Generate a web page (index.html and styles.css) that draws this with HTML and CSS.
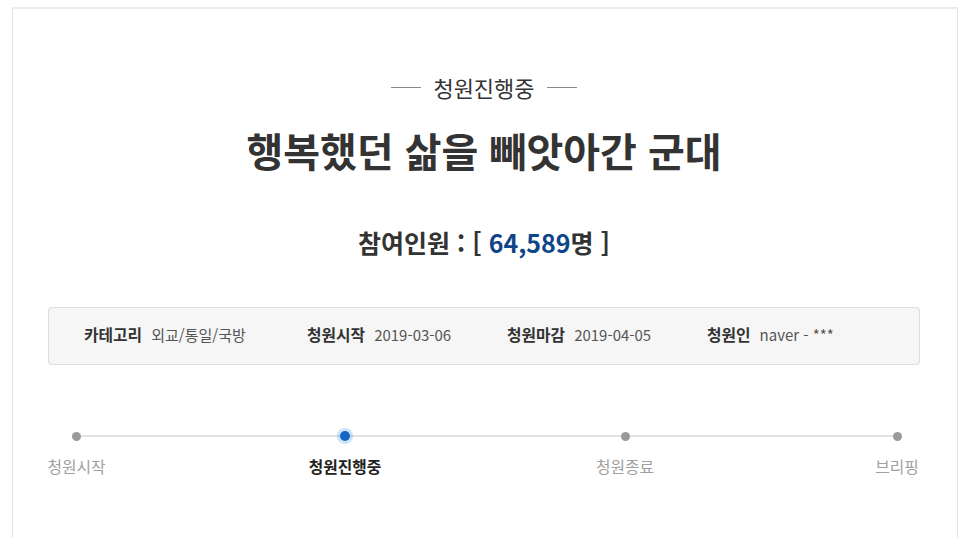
FILE: index.html
```html
<!DOCTYPE html>
<html lang="ko">
<head>
<meta charset="utf-8">
<title>청원진행중</title>
<link rel="stylesheet" href="styles.css">
</head>
<body>
<div class="page">
  <div class="card">
    <div class="status"><span class="dash"></span><span class="status-text">청원진행중</span><span class="dash"></span></div>
    <h1 class="title">행복했던 삶을 빼앗아간 군대</h1>
    <p class="count">참여인원 : [ <span class="num">64,589</span>명 ]</p>
    <ul class="info">
      <li class="info-item w-cat"><strong class="label">카테고리</strong><span class="value">외교/통일/국방</span></li>
      <li class="info-item w-date"><strong class="label">청원시작</strong><span class="value">2019-03-06</span></li>
      <li class="info-item w-date"><strong class="label">청원마감</strong><span class="value">2019-04-05</span></li>
      <li class="info-item"><strong class="label">청원인</strong><span class="value">naver - ***</span></li>
    </ul>
    <ol class="steps">
      <li class="step s1"><span class="dot-wrap"><span class="dot"></span></span><span class="step-label">청원시작</span></li>
      <li class="step s2 active"><span class="dot-wrap"><span class="dot"></span></span><span class="step-label">청원진행중</span></li>
      <li class="step s3"><span class="dot-wrap"><span class="dot"></span></span><span class="step-label">청원종료</span></li>
      <li class="step s4"><span class="dot-wrap"><span class="dot"></span></span><span class="step-label">브리핑</span></li>
    </ol>
  </div>
</div>
</body>
</html>
```

FILE: styles.css
```css
html, body {
  margin: 0;
  padding: 0;
  background: #ffffff;
  font-family: "Noto Sans CJK KR", "Noto Sans", "Liberation Sans", sans-serif;
  color: #333333;
  overflow: hidden;
}

.page {
  padding: 7px 0 0 12px;
}

.card {
  box-sizing: border-box;
  width: 946px;
  min-height: 600px;
  border: 1px solid #e4e4e4;
  border-top: 2px solid #ececec;
  padding: 0 37px 0 35px;
  background: #ffffff;
}

.status {
  margin-top: 66px;
  display: flex;
  justify-content: center;
  align-items: center;
  gap: 12px;
  height: 24px;
  line-height: 24px;
  font-size: 22px;
  color: #333333;
}

.dash {
  display: block;
  width: 30px;
  height: 1px;
  background: #8a8a8a;
}

.title {
  margin: 26px 0 0;
  text-align: center;
  font-size: 40px;
  line-height: 50px;
  font-weight: 700;
  color: #333333;
  letter-spacing: 0;
}

.count {
  margin: 50px 0 0;
  text-align: center;
  font-size: 25px;
  line-height: 34px;
  font-weight: 700;
  color: #333333;
}

.num {
  color: #0e4588;
}

.info {
  list-style: none;
  margin: 48px 0 0;
  padding: 17px 20px 19px 35px;
  display: flex;
  align-items: center;
  background: #f6f6f6;
  border: 1px solid #dddddd;
  border-radius: 3px;
  font-size: 15px;
  line-height: 20px;
}

.info-item {
  display: flex;
  align-items: center;
  gap: 9px;
  white-space: nowrap;
}

.w-cat {
  width: 223px;
}

.w-date {
  width: 200px;
}

.label {
  font-weight: 700;
  font-size: 15.8px;
  color: #333333;
}

.value {
  color: #555555;
  font-size: 15px;
}

.steps {
  position: relative;
  list-style: none;
  margin: 63px 0 0;
  padding: 0;
  display: flex;
  align-items: flex-start;
}

.steps::before {
  content: "";
  position: absolute;
  top: 7px;
  left: 28px;
  right: 21px;
  height: 2px;
  background: #e2e2e2;
}

.step {
  position: relative;
  display: flex;
  flex-direction: column;
  align-items: center;
}

.s1 { width: 57px; }
.s2 { width: 80px; margin-left: 200px; }
.s3 { width: 80px; margin-left: 200px; }
.s4 { width: 44px; margin-left: 210px; }

.dot-wrap {
  display: flex;
  align-items: center;
  justify-content: center;
  width: 16px;
  height: 16px;
}

.dot {
  display: block;
  width: 9px;
  height: 9px;
  border-radius: 50%;
  background: #9a9a9a;
}

.active .dot {
  width: 10px;
  height: 10px;
  background: #1567c4;
  box-shadow: 0 0 0 3px rgba(60, 140, 230, 0.25);
}

.step-label {
  margin-top: 13px;
  font-size: 15.8px;
  line-height: 20px;
  color: #a0a0a0;
  white-space: nowrap;
}

.active .step-label {
  color: #222222;
  font-weight: 700;
}
```
